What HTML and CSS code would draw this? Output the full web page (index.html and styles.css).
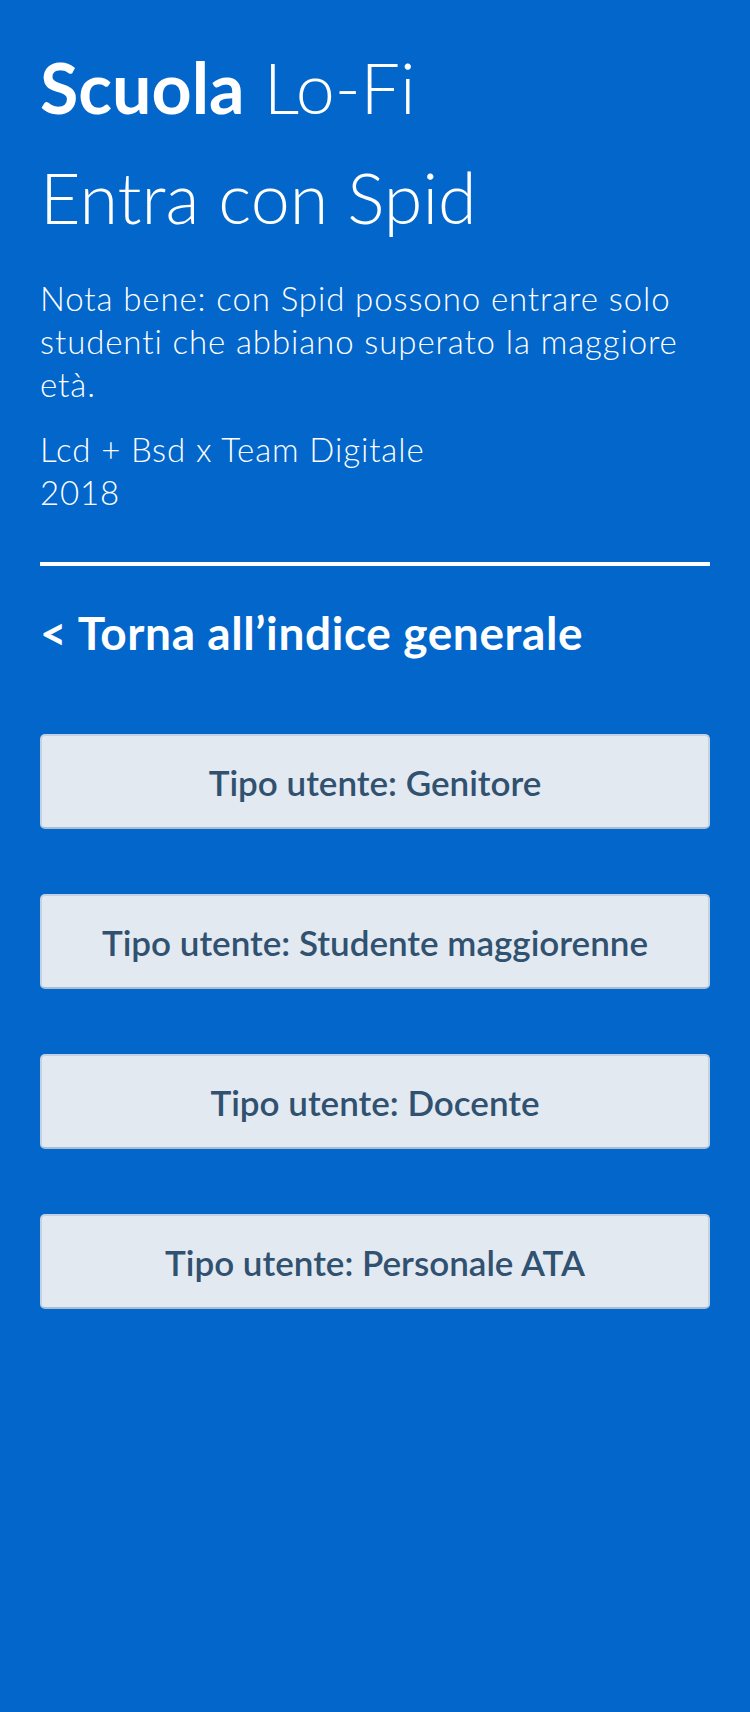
FILE: index.html
```html
<!DOCTYPE html>
<html lang="it">
<head>
<meta charset="utf-8">
<title>Scuola Lo-Fi – Entra con Spid</title>
<link rel="stylesheet" href="styles.css">
</head>
<body>
<main class="page">
  <header class="head">
    <div class="brand"><strong>Scuola</strong> Lo-Fi</div>
    <h1 class="title">Entra con Spid</h1>
  </header>
  <p class="note">Nota bene: con Spid possono entrare solo studenti che abbiano superato la maggiore età.</p>
  <p class="credits">Lcd + Bsd x Team Digitale<br>2018</p>
  <hr class="divider">
  <a class="back" href="#">&lt; Torna all’indice generale</a>
  <nav class="choices">
    <a class="btn" href="#">Tipo utente: Genitore</a>
    <a class="btn" href="#">Tipo utente: Studente maggiorenne</a>
    <a class="btn" href="#">Tipo utente: Docente</a>
    <a class="btn" href="#">Tipo utente: Personale ATA</a>
  </nav>
</main>
</body>
</html>
```
FILE: styles.css
```css
html, body {
  margin: 0;
  padding: 0;
  background: #0266cb;
}
body {
  min-height: 1712px;
  font-family: Lato, "Open Sans", sans-serif;
  color: #ffffff;
}
.page {
  padding: 32px 40px 0 40px;
}
.head {
  margin: 0;
}
.brand,
.title {
  margin: 0;
  font-size: 70px;
  line-height: 110px;
  font-weight: 300;
}
.brand strong {
  font-weight: 700;
}
.note {
  margin: 25px 0 0 0;
  font-size: 33px;
  line-height: 43px;
  letter-spacing: 0.9px;
  font-weight: 300;
}
.credits {
  margin: 22px 0 0 0;
  font-size: 33px;
  line-height: 43px;
  letter-spacing: 0.9px;
  font-weight: 300;
}
.divider {
  margin: 48px 0 0 0;
  border: 0;
  height: 4px;
  background: #ffffff;
}
.back {
  display: block;
  margin-top: 37px;
  font-size: 46px;
  line-height: 60px;
  letter-spacing: 0.6px;
  font-weight: 700;
  color: #ffffff;
  text-decoration: none;
}
.choices {
  display: flex;
  flex-direction: column;
  gap: 65px;
  margin-top: 71px;
}
.btn {
  display: flex;
  align-items: center;
  justify-content: center;
  box-sizing: border-box;
  height: 95px;
  background: #e3e9f1;
  border: 2px solid #c3d1e1;
  border-bottom-color: #a9bcd2;
  border-radius: 5px;
  color: #30516f;
  font-size: 35px;
  font-weight: 600;
  text-decoration: none;
}
```
